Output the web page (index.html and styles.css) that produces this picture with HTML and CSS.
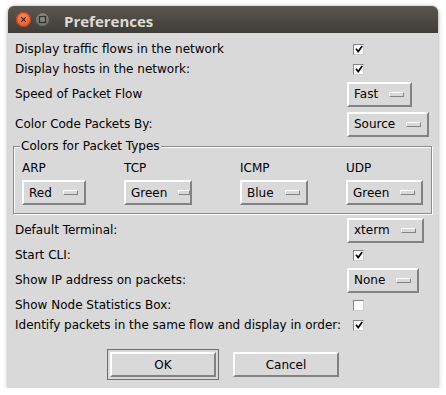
FILE: index.html
```html
<!DOCTYPE html>
<html lang="en">
  <head>
    <meta charset="utf-8">
    <title>Preferences</title>
    <link rel="stylesheet" href="styles.css">
  </head>
  <body>
    <div class="window">
      <div class="titlebar">
        <span class="wm-btn wm-close">
          <svg width="15" height="15" viewBox="0 0 15 15"><path d="M5.2 5.2l4.6 4.6M9.8 5.2l-4.6 4.6" /></svg>
        </span>
        <span class="wm-btn wm-max">
          <svg width="15" height="15" viewBox="0 0 15 15"><rect x="4.5" y="4.5" width="6" height="6" /></svg>
        </span>
        <span class="title">Preferences</span>
      </div>

      <div class="content">
        <div class="row">
          <span>Display traffic flows in the network</span>
          <span class="check"><svg width="8" height="8" viewBox="0 0 8 8"><path d="M1 3.8l2.2 2.7L7.2 1" /></svg></span>
        </div>
        <div class="row">
          <span>Display hosts in the network:</span>
          <span class="check"><svg width="8" height="8" viewBox="0 0 8 8"><path d="M1 3.8l2.2 2.7L7.2 1" /></svg></span>
        </div>
        <div class="row row-menu">
          <span>Speed of Packet Flow</span>
          <span class="menu">Fast<i></i></span>
        </div>
        <div class="row row-menu">
          <span>Color Code Packets By:</span>
          <span class="menu">Source<i></i></span>
        </div>

        <fieldset class="group">
          <legend>Colors for Packet Types</legend>
          <div class="types">
            <span class="type-label">ARP</span>
            <span class="type-label">TCP</span>
            <span class="type-label">ICMP</span>
            <span class="type-label">UDP</span>
            <span class="menu">Red<i></i></span>
            <span class="menu menu-clip">Green<i></i></span>
            <span class="menu">Blue<i></i></span>
            <span class="menu">Green<i></i></span>
          </div>
        </fieldset>

        <div class="row row-menu row-after-group">
          <span>Default Terminal:</span>
          <span class="menu">xterm<i></i></span>
        </div>
        <div class="row">
          <span>Start CLI:</span>
          <span class="check"><svg width="8" height="8" viewBox="0 0 8 8"><path d="M1 3.8l2.2 2.7L7.2 1" /></svg></span>
        </div>
        <div class="row row-menu">
          <span>Show IP address on packets:</span>
          <span class="menu">None<i></i></span>
        </div>
        <div class="row">
          <span>Show Node Statistics Box:</span>
          <span class="check"></span>
        </div>
        <div class="row">
          <span>Identify packets in the same flow and display in order:</span>
          <span class="check"><svg width="8" height="8" viewBox="0 0 8 8"><path d="M1 3.8l2.2 2.7L7.2 1" /></svg></span>
        </div>

        <div class="actions">
          <button class="btn btn-default">OK</button>
          <button class="btn">Cancel</button>
        </div>
      </div>
    </div>
  </body>
</html>
```

FILE: styles.css
```css
body {
  margin: 0;
  padding: 6px 0 0 8px;
  background: #fff;
  font-family: "DejaVu Sans", sans-serif;
  font-size: 12px;
  color: #000;
}
.window {
  width: 430px;
  background: #d9d9d9;
  border-radius: 6px 6px 0 0;
  box-shadow: 0 1px 0 #a4a4a4, 0 0 3px rgba(0,0,0,0.25), 0 2px 6px rgba(0,0,0,0.2);
}
.titlebar {
  height: 27px;
  display: flex;
  align-items: center;
  padding-left: 8px;
  border-radius: 6px 6px 0 0;
  background: linear-gradient(#5a5750, #3e3d38);
}
.wm-btn {
  width: 15px;
  height: 15px;
  border-radius: 50%;
  display: flex;
}
.wm-close {
  background: radial-gradient(circle at 50% 35%, #f68a5a, #df4f1c);
  box-shadow: inset 0 0 0 1px #b2441a;
}
.wm-close path {
  stroke: #3b1a0b;
  stroke-width: 1.2;
  fill: none;
}
.wm-max {
  margin-left: 4px;
  background: radial-gradient(circle at 50% 35%, #8e8c86, #686660);
  box-shadow: inset 0 0 0 1px #45443f;
}
.wm-max rect {
  stroke: #2f2e2a;
  stroke-width: 1.2;
  fill: none;
}
.title {
  margin: 2px 0 0 14px;
  font-family: "Open Sans", sans-serif;
  font-weight: 700;
  font-size: 15px;
  color: #dfdbd2;
}
.content {
  padding: 6px 6px 11px 5px;
}
.row {
  display: grid;
  grid-template-columns: 332px auto;
  align-items: center;
  height: 20px;
  padding-left: 2px;
}
.row-menu {
  height: 30px;
}
.row-after-group {
  margin-top: 1px;
}
.check {
  justify-self: start;
  margin-left: 6px;
  width: 11px;
  height: 11px;
  box-sizing: border-box;
  display: flex;
  align-items: center;
  justify-content: center;
  background: #fff;
  border: 1px solid;
  border-color: #858585 #cfcfcf #cfcfcf #858585;
}
.check path {
  stroke: #000;
  stroke-width: 1.7;
  fill: none;
}
.menu {
  justify-self: start;
  display: inline-flex;
  align-items: center;
  height: 25px;
  box-sizing: border-box;
  padding: 0 6px 0 5px;
  border: 2px solid;
  border-color: #fff #828282 #828282 #fff;
}
.menu i {
  width: 15px;
  height: 5px;
  box-sizing: border-box;
  margin-left: 11px;
  border: 1px solid;
  border-color: #fff #828282 #828282 #fff;
}
.menu-clip {
  padding-right: 0;
}
.menu-clip i {
  width: 12px;
}
.group {
  margin: 0;
  padding: 8px 0 8px 8px;
  border: 1px solid #8c8c8c;
  box-shadow: inset 1px 1px 0 #fff, 1px 1px 0 #fff;
}
.group legend {
  margin-left: -2px;
  padding: 0 1px;
  background: #d9d9d9;
}
.types {
  display: grid;
  grid-template-columns: 102px 116px 106px auto;
  row-gap: 5px;
  justify-items: start;
}
.type-label {
  line-height: 14px;
}
.actions {
  display: flex;
  gap: 17px;
  margin: 17px 0 0 97px;
}
.btn {
  width: 106px;
  height: 25px;
  padding: 0;
  font: inherit;
  color: #000;
  background: #d9d9d9;
  border: 2px solid;
  border-color: #fff #828282 #828282 #fff;
}
.btn-default {
  outline: 1px solid #6e6e6e;
  outline-offset: 2px;
}
```
